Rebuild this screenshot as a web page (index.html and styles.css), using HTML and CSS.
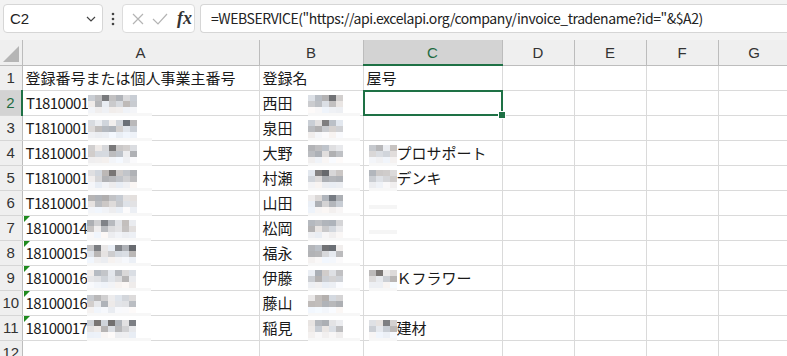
FILE: index.html
```html
<!DOCTYPE html>
<html lang="ja">
<head>
<meta charset="UTF-8">
<title>Sheet</title>
<link rel="stylesheet" href="styles.css">
</head>
<body>

<div class="toolbar">
  <div class="namebox">
    <span>C2</span>
    <svg class="chevron" width="10" height="6" viewBox="0 0 10 6"><path d="M1 1 L5 5 L9 1" fill="none" stroke="#444" stroke-width="1.2"/></svg>
  </div>
  <svg class="dots" width="4" height="14" viewBox="0 0 4 14"><circle cx="2" cy="2" r="1.3" fill="#444"/><circle cx="2" cy="7" r="1.3" fill="#444"/><circle cx="2" cy="12" r="1.3" fill="#444"/></svg>
  <div class="fxbox">
    <svg width="12" height="12" viewBox="0 0 12 12"><path d="M1 1 L11 11 M11 1 L1 11" stroke="#b4b4b4" stroke-width="1.2"/></svg>
    <svg width="16" height="12" viewBox="0 0 16 12"><path d="M1 6 L6 11 L15 1" fill="none" stroke="#b4b4b4" stroke-width="1.2"/></svg>
    <span class="fx">fx</span>
  </div>
  <div class="formula">=WEBSERVICE("https://api.excelapi.org/company/invoice_tradename?id="&amp;$A2)</div>
</div>

<table class="sheet" id="sheet">
  <colgroup>
    <col class="w-head"><col class="w-a"><col class="w-b"><col class="w-c">
    <col class="w-d"><col class="w-d"><col class="w-d"><col class="w-d">
  </colgroup>
  <thead>
    <tr>
      <th class="corner"><div class="tri"></div></th>
      <th>A</th><th>B</th><th class="sel-col">C</th><th>D</th><th>E</th><th>F</th><th>G</th>
    </tr>
  </thead>
  <tbody id="rows"></tbody>
</table>

<script>
// a: id text, tri: number stored as text, b: name, c: trade name, m: mosaic in C
const rows = [
  { a: "登録番号または個人事業主番号", b: "登録名", c: "屋号", head: true },
  { a: "T1810001", b: "西田" },
  { a: "T1810001", b: "泉田" },
  { a: "T1810001", b: "大野", c: "プロサポート", m: true },
  { a: "T1810001", b: "村瀬", c: "デンキ", m: true },
  { a: "T1810001", b: "山田", faint: true },
  { a: "18100014", b: "松岡", tri: true, faint: true },
  { a: "18100015", b: "福永", tri: true },
  { a: "18100016", b: "伊藤", tri: true, c: "Ｋフラワー", m: true },
  { a: "18100016", b: "藤山", tri: true },
  { a: "18100017", b: "稲見", tri: true, c: "建材", m: true },
  {}
];

let seed = 7;
function rand() {
  seed = (seed * 9301 + 49297) % 233280;
  return seed / 233280;
}

function mosaic(cols, cls) {
  let html = '<span class="mosaic ' + cls + '">';
  for (let r = 0; r < 3; r++) {
    html += '<span class="mrow">';
    for (let c = 0; c < cols; c++) {
      let v = r === 2 ? 236 + Math.floor(rand() * 16) : 175 + Math.floor(rand() * 65);
      if (r === 0 && rand() > 0.86) v = 105 + Math.floor(rand() * 30);
      const t = Math.floor(rand() * 10) - 5;
      html += '<i style="background: rgb(' + (v + t) + ',' + v + ',' + (v - t + 2) + ')"></i>';
    }
    html += '</span>';
  }
  return html + '<span class="band"></span></span>';
}

const body = document.getElementById('rows');
rows.forEach((row, i) => {
  const tr = document.createElement('tr');
  const n = i + 1;
  let a = row.a || '';
  let b = row.b || '';
  let c = row.c || '';
  if (!row.head && row.a) {
    a = (row.tri ? '<span class="err"></span>' : '') + '<span class="id">' + a + '</span>' + mosaic(7, 'm-a');
    b = b + mosaic(5, 'm-b');
  }
  if (row.m) c = mosaic(4, 'm-c') + c;
  if (row.faint) c = '<span class="faint"></span>';
  tr.innerHTML = `
    <th class="${n === 2 ? 'sel-row' : ''}">${n}</th>
    <td>${a}</td><td>${b}</td>
    <td class="${n === 2 ? 'active' : ''}">${c}</td>
    <td></td><td></td><td></td><td></td>
  `;
  body.appendChild(tr);
});
</script>
</body>
</html>
```

FILE: styles.css
```css
* {
  margin: 0;
  padding: 0;
  box-sizing: border-box;
}

body {
  background: #fff;
  width: 787px;
  height: 356px;
  overflow: hidden;
  font-family: "Noto Sans CJK JP", "Noto Sans", sans-serif;
  color: #1a1a1a;
}

.toolbar {
  height: 40px;
  background: #f3f3f3;
  display: flex;
  align-items: flex-start;
  padding: 4px 0 0 3px;
}

.namebox {
  width: 100px;
  height: 29px;
  background: #fff;
  border: 1px solid #d6d6d6;
  border-radius: 4px;
  display: flex;
  align-items: center;
  justify-content: space-between;
  padding: 0 6px 0 6px;
  font-family: "Liberation Sans", sans-serif;
  font-size: 15px;
  color: #222;
}

.dots {
  margin: 8px 7px 0 8px;
}

.fxbox {
  width: 73px;
  height: 29px;
  background: #fff;
  border: 1px solid #dcdcdc;
  border-radius: 4px;
  display: flex;
  align-items: center;
  gap: 8px;
  padding-left: 9px;
}

.fx {
  font-family: "Liberation Serif", serif;
  font-style: italic;
  font-weight: bold;
  font-size: 18px;
  color: #333;
  margin-left: 1px;
}

.formula {
  flex: 1;
  height: 29px;
  margin-left: 5px;
  background: #fff;
  border: 1px solid #d6d6d6;
  border-right: none;
  border-radius: 4px 0 0 4px;
  padding-left: 10px;
  font-size: 14px;
  line-height: 27px;
  color: #222;
  white-space: nowrap;
  letter-spacing: -0.45px;
}

.sheet {
  border-collapse: collapse;
  table-layout: fixed;
  width: 790px;
}

.w-head { width: 22px; }
.w-a { width: 237px; }
.w-b { width: 104px; }
.w-c { width: 139px; }
.w-d { width: 72px; }

.sheet th {
  background: #efefef;
  font-weight: normal;
  font-size: 15px;
  color: #333;
  height: 25px;
  border-right: 1px solid #d2d2d2;
  border-bottom: 1px solid #c8c8c8;
  text-align: center;
  font-family: "Liberation Sans", sans-serif;
}

.sheet thead th {
  border-right: 1px solid #bcbcbc;
  border-bottom: 1px solid #bdbdbd;
}

.sheet tbody th {
  border-right: 1px solid #bdbdbd;
  border-bottom: 1px solid #d6d6d6;
}

.sheet th.corner {
  position: relative;
}

.tri {
  position: absolute;
  right: 3px;
  bottom: 3px;
  width: 0;
  height: 0;
  border-left: 16px solid transparent;
  border-bottom: 16px solid #b5b5b5;
}

.sheet th.sel-col {
  background: #d3d3d3;
  border-bottom: 2px solid #1e7145;
  color: #1e6b40;
}

.sheet th.sel-row {
  background: #d3d3d3;
  border-right: 2px solid #1e7145;
  color: #1e6b40;
}

.sheet td {
  height: 25px;
  border-right: 1px solid #dadada;
  border-bottom: 1px solid #dadada;
  padding: 0 3px;
  font-size: 15px;
  white-space: nowrap;
  overflow: visible;
  position: relative;
  vertical-align: middle;
}

.sheet td.active::after {
  content: "";
  position: absolute;
  left: -1px;
  top: -1px;
  right: -1px;
  bottom: -1px;
  border: 2px solid #1e7145;
}

.sheet td.active::before {
  content: "";
  position: absolute;
  right: -4px;
  bottom: -4px;
  width: 6px;
  height: 6px;
  background: #1e7145;
  border: 1px solid #fff;
  z-index: 2;
}

.id {
  letter-spacing: -0.6px;
}

.err {
  position: absolute;
  left: 1px;
  top: 0;
  width: 0;
  height: 0;
  border-top: 6px solid #1f8a1f;
  border-right: 6px solid transparent;
}

.mosaic {
  display: inline-block;
  vertical-align: middle;
  position: relative;
  margin-top: -2px;
}

.mrow {
  display: flex;
}

.mrow i {
  display: block;
  width: 7px;
  height: 6px;
}

.band {
  position: absolute;
  left: 0;
  top: 18px;
  height: 3px;
  background: #f7f7f7;
}

.m-a .band { width: 64px; }
.m-b { margin-left: 15px; }
.m-b .band { width: 52px; }
.m-c { margin-left: 2px; }
.m-c .band { width: 28px; }

.faint {
  display: inline-block;
  width: 28px;
  height: 4px;
  margin-left: 2px;
  background: #f5f5f5;
}
```
